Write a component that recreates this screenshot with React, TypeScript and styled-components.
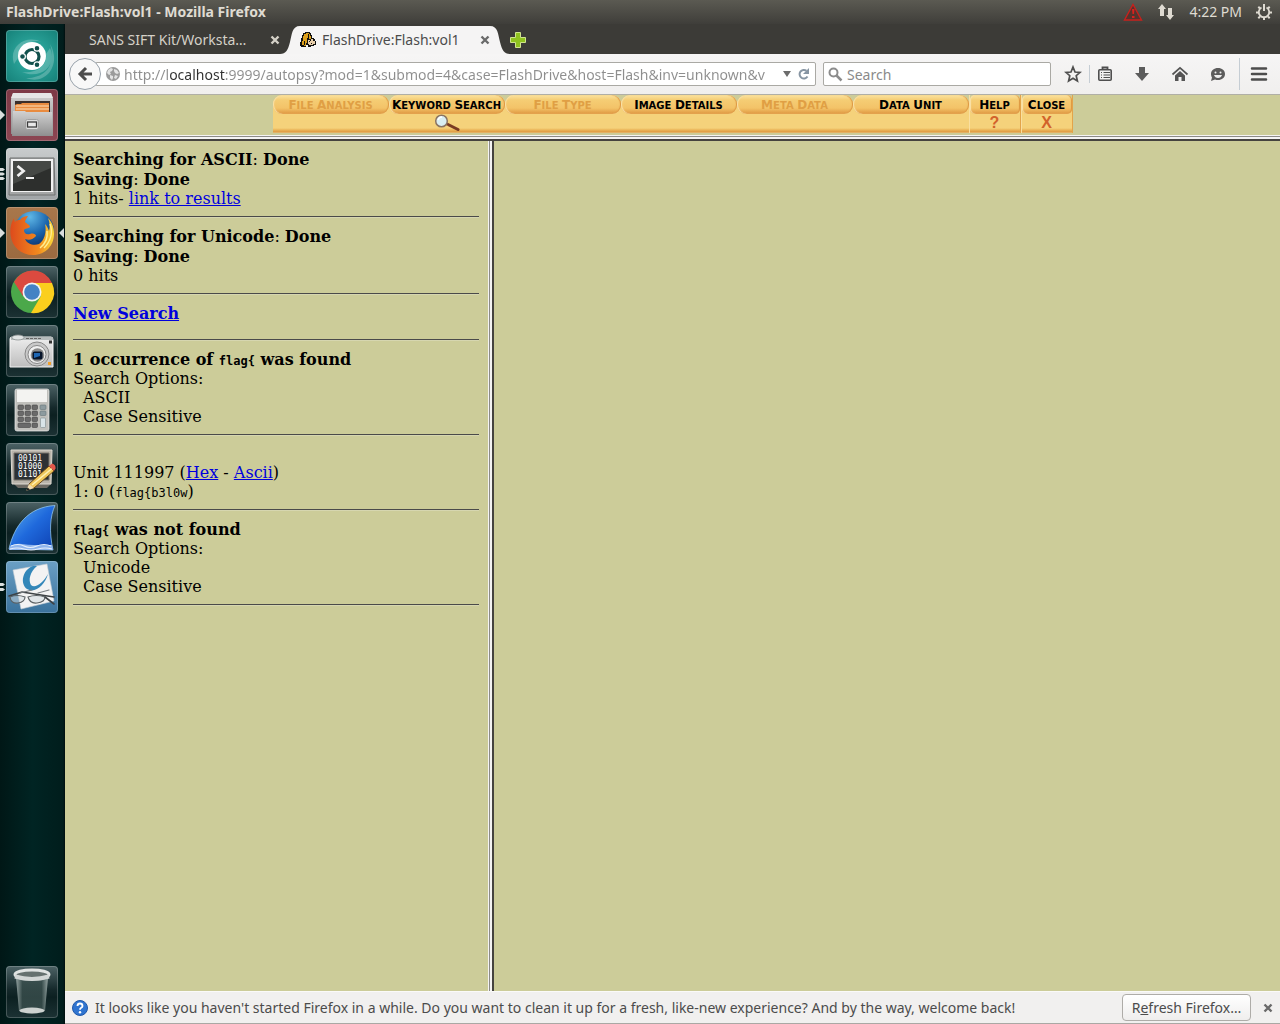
import React from "react";
import styled, { createGlobalStyle, css } from "styled-components";

const ui = `"Noto Sans", "Open Sans", sans-serif`;
const paper = "#cccc99";

const GlobalStyle = createGlobalStyle`
  *, *::before, *::after { box-sizing: border-box; }
  body { margin: 0; background: #001a1a; }
  button, input { font: inherit; color: inherit; }
  button { padding: 0; border: 0; background: none; cursor: pointer; }
  svg { display: block; flex: none; }
`;

/* ---------- desktop shell ---------- */

const Desktop = styled.div`
  display: flex;
  flex-direction: column;
  min-height: 100vh;
  font: 14px/20px ${ui};
`;

const Panel = styled.header`
  display: flex;
  align-items: center;
  justify-content: space-between;
  height: 24px;
  padding: 0 8px 0 6px;
  color: #dfdbd2;
  background: linear-gradient(#5b5a52, #3f3e3a);
`;

const PanelTitle = styled.h1`
  margin: 0;
  font-size: 14px;
  font-weight: 700;
  line-height: 24px;
  white-space: nowrap;
`;

const Indicators = styled.div`
  display: flex;
  align-items: center;
  gap: 14px;
`;

const Clock = styled.time`
  line-height: 24px;
`;

const Workspace = styled.div`
  display: flex;
  flex: 1;
`;

const Launcher = styled.nav`
  display: flex;
  flex-direction: column;
  flex: none;
  gap: 7px;
  width: 65px;
  padding: 6px;
  background: linear-gradient(90deg, #001716, #002423 50%, #001d1c 97%, #000e0e);
`;

const LauncherButton = styled.button<{ $fill: string; $last?: boolean }>`
  position: relative;
  width: 52px;
  height: 52px;
  border-radius: 4px;
  background: ${(p) => p.$fill};
  box-shadow: inset 0 0 0 1px rgba(255, 255, 255, 0.2);
  ${(p) => p.$last && css`margin-top: auto;`}
`;

const Marker = styled.svg<{ $side: "left" | "right" }>`
  position: absolute;
  top: 20px;
  ${(p) => (p.$side === "left" ? "left: -6px;" : "right: -6px;")}
`;

/* ---------- browser chrome ---------- */

const Window = styled.div`
  display: flex;
  flex: 1;
  flex-direction: column;
  min-width: 0;
  color: #4c4c4c;
`;

const TabStrip = styled.div`
  display: flex;
  align-items: flex-end;
  height: 30px;
  padding-left: 13px;
  background: #3c3b37;
`;

const Tab = styled.div<{ $active?: boolean }>`
  display: flex;
  align-items: center;
  height: 28px;
  gap: 6px;
  color: ${(p) => (p.$active ? "#4c4c4c" : "#d5d1c8")};
  background: ${(p) => (p.$active ? "#f5f4f4" : "none")};
  width: ${(p) => (p.$active ? "190px" : "202px")};
  padding-left: ${(p) => (p.$active ? "0" : "11px")};
`;

const TabLabel = styled.button`
  flex: 1;
  overflow: hidden;
  text-align: left;
  white-space: nowrap;
`;

const NewTab = styled.button`
  align-self: center;
  padding-top: 1px;
`;

const Toolbar = styled.div`
  display: flex;
  align-items: center;
  height: 41px;
  padding: 0 9px 0 4px;
  background: linear-gradient(#f6f5f5, #f0efee);
  border-bottom: 1px solid #b0afa6;
`;

const Back = styled.button`
  display: grid;
  flex: none;
  place-items: center;
  z-index: 1;
  width: 32px;
  height: 32px;
  margin-right: -6px;
  border: 1px solid #98a2ab;
  border-radius: 50%;
  background: #f8f8f8;
`;

const Field = styled.div`
  display: flex;
  align-items: center;
  min-width: 0;
  height: 24px;
  gap: 4px;
  border: 1px solid #aaa9a4;
  border-radius: 2px;
  background: #fff;
`;

const AddressField = styled(Field)`
  flex: 1;
  padding: 0 4px 0 10px;
  margin-right: 7px;
`;

const SearchField = styled(Field)`
  flex: 0 1 228px;
  padding: 0 4px;
`;

const TextInput = styled.input`
  flex: 1;
  min-width: 0;
  height: 22px;
  padding: 0;
  border: 0;
  outline: 0;
  background: none;
  color: #8a8a8a;
  &::placeholder { color: #8a8a8a; opacity: 1; }
`;

/* The host name reads darker than the rest of the address. */
const AddressInput = styled(TextInput)`
  color: #8e8e8e;
  background: linear-gradient(90deg, #8e8e8e 44px, #303030 44px 101px, #8e8e8e 101px);
  background-clip: text;
  -webkit-background-clip: text;
  -webkit-text-fill-color: transparent;
`;

const Tools = styled.div`
  display: flex;
  align-items: center;
  gap: 20px;
  padding-left: 13px;
`;

const ToolGroup = styled.div`
  display: flex;
  align-items: center;
  gap: 7px;
`;

const MenuGroup = styled(ToolGroup)`
  margin-left: -8px;
`;

const Rule = styled.span<{ $tall?: boolean }>`
  width: 1px;
  height: ${(p) => (p.$tall ? "32px" : "18px")};
  background: #c5cdd4;
`;

/* ---------- page frames ---------- */

const Frameset = styled.main`
  display: flex;
  flex: 1;
  flex-direction: column;
  background: ${paper};
  color: #000;
`;

const NavFrame = styled.nav`
  display: flex;
  justify-content: center;
  height: 40px;
`;

const HorizontalSplit = styled.div`
  height: 6px;
  background: linear-gradient(#f4f3f2 1px, #8c8b88 1px 2px, #f4f3f2 2px 4px, #45433f 4px);
`;

const Columns = styled.div`
  display: grid;
  flex: 1;
  grid-template-columns: 35fr 6px 65fr;
`;

const VerticalSplit = styled.div`
  background: linear-gradient(90deg, #f4f3f2 1px, #8c8b88 1px 2px, #f4f3f2 2px 4px, #45433f 4px);
`;

const NavItem = styled.a<{ $small?: boolean; $muted?: boolean }>`
  display: flex;
  flex-direction: column;
  width: ${(p) => (p.$small ? "52px" : "116px")};
  height: 38px;
  text-decoration: none;
  color: ${(p) => (p.$muted ? "#e09f44" : "#000")};
  background: linear-gradient(transparent 12px, #f5d27b 12px 33px, #eab458 35px, #de9b42 37px, #e8c98a);
  ${(p) => p.$small && css`border-right: 1px solid #e3a44a; border-left: 1px solid #f9dfa0;`}
`;

const NavLabel = styled.span<{ $small?: boolean }>`
  display: block;
  height: 19px;
  border-radius: ${(p) => (p.$small ? "5px" : "9px")};
  background: linear-gradient(#fbe3a0, #f5cd74 5px, #f3c368 13px, #de9641);
  box-shadow: inset 1px 0 1px #fae3ac, inset -1px 0 1px #dd9640;
  font: 700 10px/20px "DejaVu Sans", sans-serif;
  text-align: center;
  white-space: nowrap;
`;

const NavWord = styled.span`
  display: inline-block;
  text-transform: uppercase;
  &::first-letter { font-size: 12px; }
`;

const NavMark = styled.span`
  display: flex;
  justify-content: center;
  height: 19px;
  color: #d2622b;
  font: 700 16px/18px "Liberation Sans", sans-serif;
`;

const Results = styled.section`
  padding: 8px 9px 8px 8px;
  font: 16px/19px "DejaVu Serif", serif;

  a { color: #0000dd; text-decoration: underline; }
`;

const Line = styled.div<{ $strong?: boolean; $indent?: boolean }>`
  padding-top: ${(p) => (p.$strong ? "1px" : "0")};
  padding-left: ${(p) => (p.$indent ? "10px" : "0")};
`;

const Code = styled.code`
  font-family: "DejaVu Sans Mono", monospace;
  font-size: 12px;
  line-height: 16px;
`;

const Divider = styled.hr`
  height: 2px;
  margin: 8px 0;
  border: 0;
  border-top: 1px solid #4a4a4a;
  border-bottom: 1px solid #d6d6b0;
`;

const Gap = styled.div<{ $size: number }>`
  height: ${(p) => p.$size}px;
`;

/* ---------- notification ---------- */

const Notice = styled.footer`
  display: flex;
  align-items: center;
  height: 33px;
  padding: 0 7px;
  gap: 7px;
  background: #f1f0ef;
  border-top: 1px solid #fafaf8;
  border-bottom: 1px solid #aaa8a4;
`;

const NoticeText = styled.p`
  flex: 1;
  margin: 0;
  white-space: nowrap;
`;

const Refresh = styled.button`
  width: 129px;
  height: 27px;
  margin-right: 5px;
  border: 1px solid #aeaca8;
  border-radius: 4px;
  background: linear-gradient(#ffffff, #efeeed);
  white-space: nowrap;
`;

/* ---------- drawings ---------- */

const CloseGlyph = ({ color }: { color: string }) => (
  <svg width="10" height="10" viewBox="0 0 10 10" aria-hidden="true">
    <path d="M1.5 1.5l7 7M8.5 1.5l-7 7" stroke={color} strokeWidth="2.4" />
  </svg>
);

const TabEdge = ({ flip }: { flip?: boolean }) => (
  <svg width="20" height="28" viewBox="0 0 20 28" aria-hidden="true">
    <path
      d={flip ? "M0 0C8 0 8 8 10 16C12 24 14 28 20 28H0Z" : "M20 0C12 0 12 8 10 16C8 24 6 28 0 28H20Z"}
      fill="#f5f4f4"
    />
  </svg>
);

const DogIcon = () => (
  <svg width="16" height="16" viewBox="0 0 16 16" aria-hidden="true" shapeRendering="crispEdges">
    <path d="M5 0h5v1h1v2h1v3h2v1h1v2h1v4h-2v1h-3v1H8v-2H6v2H1v-1H0v-4h1V6h1V3h1V1h2z" fill="#111" />
    <path d="M6 1h3v1H8v4H7v5H6v3H4v-1h1V9H4v4H2V9h1V4h1V2h2zM9 2h1v2h1v3H9z" fill="#dda01c" />
    <path d="M8 8h2v1h1V7h2v1h2v4h-2v1H9v-1H8z" fill="#ead0ac" />
    <path d="M9 9h1v1H9zM13 8h2v1h-2zM11 11h1v1h-1z" fill="#111" />
  </svg>
);

const Globe = () => (
  <svg width="14" height="14" viewBox="0 0 14 14" aria-hidden="true">
    <circle cx="7" cy="7" r="7" fill="#9b9b9b" />
    <path d="M2 3l3-2 2 1-1 2-2 1 1 2-2 1-2-2zM8 2l3 1 2 3-2 1-2-1-1-2zM4 8l3 1v2l-1 2-2-2zM9 8l3 1-2 3-2-1z" fill="#e3e3e3" />
  </svg>
);

const UbuntuIcon = () => (
  <svg width="52" height="52" viewBox="0 0 52 52" aria-hidden="true">
    <path d="M8 34C2 16 20 4 36 12C24 8 12 18 12 28zM44 18C52 36 34 50 16 42C30 44 42 36 40 24zM20 48C42 48 50 32 44 14C56 34 40 56 20 48z" fill="#fff" opacity=".22" />
    <circle cx="26" cy="26" r="14" fill="#fff" />
    <circle cx="26" cy="26.5" r="7" fill="none" stroke="#12504c" strokeWidth="3.2" />
    <g fill="#12504c" stroke="#fff" strokeWidth="1.2">
      <circle cx="16.5" cy="26.5" r="2.9" />
      <circle cx="31" cy="18.3" r="2.9" />
      <circle cx="31" cy="34.7" r="2.9" />
    </g>
  </svg>
);

const FilesIcon = () => (
  <svg width="52" height="52" viewBox="0 0 52 52" aria-hidden="true">
    <defs>
      <linearGradient id="drawer" x1="0" y1="0" x2="0" y2="1"><stop offset="0" stopColor="#d2d2d2" /><stop offset="1" stopColor="#8f8f8f" /></linearGradient>
    </defs>
    <path d="M7 4h38l2 6v35H5V10z" fill="url(#drawer)" />
    <path d="M7 4h38l2 5H5z" fill="#e6e6e6" />
    <path d="M9 12h35v11H9z" fill="#3a2f2b" />
    <path d="M9 16l2-1h4l1-1h27v9H9z" fill="#e98b3f" />
    <path d="M10 17h33M10 20h33" stroke="#fde2bd" strokeWidth="1" />
    <path d="M7 22h12l1 1h26l1 24H6z" fill="url(#drawer)" />
    <rect x="19.5" y="30.5" width="13" height="10" rx="2" fill="#dedede" stroke="#a0a0a0" />
    <rect x="21.5" y="33" width="9" height="5" fill="#e8e8e8" stroke="#3c3c3c" strokeWidth="1.3" />
  </svg>
);

const TerminalIcon = () => (
  <svg width="52" height="52" viewBox="0 0 52 52" aria-hidden="true">
    <path d="M4 10h44l1 37H3z" fill="#a4a6a6" stroke="#6f7171" />
    <path d="M5 11h42v33H5z" fill="#f2f2f2" />
    <rect x="7" y="13" width="38" height="30" fill="#2d2f2d" />
    <path d="M7 13h38v7L7 36z" fill="#454845" />
    <path d="M11.5 18l6 5-6 5" fill="none" stroke="#f2f2f2" strokeWidth="2.8" />
    <path d="M20 30h8" stroke="#f2f2f2" strokeWidth="2" />
  </svg>
);

const FirefoxIcon = () => (
  <svg width="52" height="52" viewBox="0 0 52 52" aria-hidden="true">
    <defs>
      <radialGradient id="sea" cx=".4" cy=".15" r=".8"><stop offset="0" stopColor="#5fb7e6" /><stop offset=".55" stopColor="#1c66ae" /><stop offset="1" stopColor="#0b2d66" /></radialGradient>
      <linearGradient id="fox" x1="0" y1="0" x2="1" y2="0"><stop offset="0" stopColor="#dd4b1c" /><stop offset=".65" stopColor="#f28a1e" /><stop offset="1" stopColor="#fbd93a" /></linearGradient>
    </defs>
    <circle cx="28" cy="24" r="20" fill="url(#sea)" />
    <path d="M8 11C5 16 4 21 4.5 28C6 40 15 48 27 48C40 48 48 38 48 27C48 20 46 15 42 11C44 16 44 20 43 24C42 21 41 19 39 17C41 25 38 34 33 37C28 39 21 37 19 32C24 34 27 32 30 29C30 27 27 26 24 27C20 28 18 26 18 23C19 21 22 22 24 20C24 18 21 17 19 15C19 13 21 11 22 9C19 9 16 10 14 13C12 13 11 13 9 15C8 13 8 12 8 11Z" fill="url(#fox)" />
    <path d="M44 17C47 25 45 34 38 41M41 24C42 31 39 37 34 41" fill="none" stroke="#ffee91" strokeWidth="1.5" />
  </svg>
);

const ChromeIcon = () => (
  <svg width="52" height="52" viewBox="0 0 52 52" aria-hidden="true">
    <circle cx="26" cy="26" r="21" fill="#4ba84a" />
    <path d="M8 16A21 21 0 0 1 46 17H26L17 30z" fill="#db4a3f" />
    <path d="M46 17A21 21 0 0 1 25 47L35 30 28 17z" fill="#fbcf1d" />
    <circle cx="26" cy="26" r="9.5" fill="#f4f4f4" />
    <circle cx="26" cy="26" r="7.8" fill="#4482c4" />
  </svg>
);

const CameraIcon = () => (
  <svg width="52" height="52" viewBox="0 0 52 52" aria-hidden="true">
    <defs>
      <linearGradient id="body" x1="0" y1="0" x2="0" y2="1"><stop offset="0" stopColor="#eeeeee" /><stop offset="1" stopColor="#bdbdbd" /></linearGradient>
    </defs>
    <path d="M4 14q0-2 2-2h39q2 0 2 3v27H4z" fill="url(#body)" stroke="#f4f4f4" />
    <path d="M5 15h42v-3H5z" fill="#b4baba" />
    <ellipse cx="12" cy="12.5" rx="6" ry="2.5" fill="#dfe3e3" stroke="#8a9090" strokeWidth=".8" />
    <path d="M20 13.5h15" stroke="#666" strokeDasharray="3 1" />
    <rect x="43" y="15.5" width="3" height="3" fill="#333" />
    <circle cx="31" cy="29" r="12" fill="#c9c9c9" stroke="#888" />
    <circle cx="31" cy="29.5" r="9" fill="#f0f0f0" stroke="#888" />
    <circle cx="31.5" cy="30" r="6.8" fill="#8a8a8a" />
    <rect x="26.5" y="26.5" width="10" height="8" rx="2" fill="#07142a" />
    <path d="M28 28h6v3l-6 2z" fill="#1e66b4" />
    <rect x="42" y="37" width="3" height="3" fill="#f0a02c" />
  </svg>
);

const CalculatorIcon = () => (
  <svg width="52" height="52" viewBox="0 0 52 52" aria-hidden="true">
    <rect x="9" y="5" width="34" height="42" rx="2" fill="#c0c0bc" stroke="#eee" strokeWidth=".7" />
    <rect x="11" y="6" width="30" height="12" fill="#f3f3f1" />
    {[21, 27, 33].map((y) =>
      [12, 19, 26].map((x) => <rect key={`${x}-${y}`} x={x} y={y} width="5.5" height="4.5" rx="1" fill="#6a6a6a" stroke="#444" strokeWidth=".6" />)
    )}
    <rect x="12" y="39" width="12.5" height="4.5" rx="1" fill="#6a6a6a" stroke="#444" strokeWidth=".6" />
    <rect x="26" y="39" width="5.5" height="4.5" rx="1" fill="#6a6a6a" stroke="#444" strokeWidth=".6" />
    <rect x="34" y="21" width="6" height="4.5" rx="1" fill="#8d9b9f" stroke="#66757a" strokeWidth=".6" />
    <rect x="34" y="27" width="6" height="4.5" rx="1" fill="#8d9b9f" stroke="#66757a" strokeWidth=".6" />
    <rect x="34.5" y="34" width="5" height="9.5" rx="1" fill="#d9e4e8" stroke="#7d8b8f" strokeWidth=".6" />
  </svg>
);

const HexEditorIcon = () => (
  <svg width="52" height="52" viewBox="0 0 52 52" aria-hidden="true">
    <path d="M8 41h37l-4 4H12z" fill="#6d6a64" />
    <path d="M5 7h41l-1 34H6z" fill="#b9b4ab" stroke="#dedad2" />
    <path d="M8 10h35v27H8z" fill="#2d3134" stroke="#77736b" />
    <text fill="#fff" fontFamily="DejaVu Sans Mono, monospace" fontSize="8">
      <tspan x="12" y="18">00101</tspan>
      <tspan x="12" y="26">01000</tspan>
      <tspan x="12" y="34">01101</tspan>
    </text>
    <path d="M23 41L43 23l5 5-20 17-5 1z" fill="#efc65b" stroke="#5b3c14" strokeWidth=".9" />
    <path d="M26 42L46 25.5" stroke="#fff1b4" strokeWidth="1.6" />
    <path d="M43 23l3-2.5q4 1 3.5 5L48 28z" fill="#e2564a" />
    <path d="M20 48l3-7 5 4z" fill="#f0dcb0" />
    <path d="M20 48l1.5-3.5 2.5 2z" fill="#222" />
  </svg>
);

const SharkIcon = () => (
  <svg width="52" height="52" viewBox="0 0 52 52" aria-hidden="true">
    <defs>
      <linearGradient id="fin" x1="0" y1="0" x2="1" y2="1"><stop offset="0" stopColor="#5db0f0" /><stop offset=".5" stopColor="#1f69dc" /><stop offset="1" stopColor="#0d3fb0" /></linearGradient>
    </defs>
    <path d="M3 47C8 24 22 5 49 3.5C44 14 43 30 47 48z" fill="url(#fin)" stroke="#9cd2f6" strokeWidth=".7" />
    <path d="M4 44q6-3 12-2t12 1 10 0 8 0l1 5H3z" fill="#8fb4ec" />
    <path d="M5 44q7-3 13 0t13 0 14 0M4 47q7-2 14 0t14 0 14 0" fill="none" stroke="#e6effc" strokeWidth="1.2" />
  </svg>
);

const ReaderIcon = () => (
  <svg width="52" height="52" viewBox="0 0 52 52" aria-hidden="true">
    <path d="M7 9L41 3l7 37-33 8z" fill="#f3f3f3" stroke="#c4cdd4" strokeWidth=".6" />
    <path d="M27 5C16 9 14 23 21 28C29 33 39 24 42 13C37 22 29 28 25 24C22 19 24 11 31 5z" fill="#3387b9" />
    <g fill="none" strokeLinecap="round">
      <path d="M3 35L16 31l32 5" stroke="#3d4245" strokeWidth="1.6" />
      <path d="M14 32L26 29M32 32l11-3" stroke="#777d80" strokeWidth="1.2" />
      <path d="M4 36q1 7 8 6 7-1 7-6-8-3-15 0zM22 36q2 7 9 6 8-1 8-6-9-3-17 0z" fill="#cfd9df" fillOpacity=".5" stroke="#5a6063" strokeWidth="1.1" />
      <path d="M39 36l9 7" stroke="#3d4245" strokeWidth="1.6" />
    </g>
  </svg>
);

const TrashIcon = () => (
  <svg width="52" height="52" viewBox="0 0 52 52" aria-hidden="true">
    <defs>
      <linearGradient id="bin" x1="0" y1="0" x2="1" y2="0"><stop offset="0" stopColor="#b5c2c0" /><stop offset=".2" stopColor="#3d5250" /><stop offset=".8" stopColor="#3d5250" /><stop offset="1" stopColor="#b5c2c0" /></linearGradient>
    </defs>
    <path d="M10 12l3 33q13 6 26 0l3-33z" fill="url(#bin)" opacity=".75" />
    <ellipse cx="26" cy="44.5" rx="12.5" ry="3" fill="#cdd2d0" />
    <ellipse cx="26" cy="8.5" rx="17" ry="4.5" fill="#66716f" stroke="#e0e3e2" strokeWidth="3" />
    <path d="M9 10.5q17 5 34 0" fill="none" stroke="#d2d6d5" strokeWidth="4" />
  </svg>
);

const glass = "linear-gradient(#4d6366, #15292b 45%, #0c2021 60%, #1c3234)";

const apps = [
  { name: "Search your computer", fill: "radial-gradient(#35b5aa, #158078)", Icon: UbuntuIcon },
  { name: "Files", fill: "linear-gradient(#7d3946, #8c4652)", Icon: FilesIcon, windows: 1 },
  { name: "Terminal", fill: "linear-gradient(#c9cccd, #a0a4a6)", Icon: TerminalIcon, windows: 3 },
  { name: "Firefox Web Browser", fill: "linear-gradient(#a8774b, #9b6a40)", Icon: FirefoxIcon, windows: 1, focused: true },
  { name: "Google Chrome", fill: glass, Icon: ChromeIcon },
  { name: "Screenshot", fill: glass, Icon: CameraIcon },
  { name: "Calculator", fill: glass, Icon: CalculatorIcon },
  { name: "Hex Editor", fill: glass, Icon: HexEditorIcon },
  { name: "Wireshark", fill: glass, Icon: SharkIcon },
  { name: "Document Viewer", fill: "linear-gradient(#6ba0c4, #3a729c)", Icon: ReaderIcon, windows: 2 },
  { name: "Trash", fill: glass, Icon: TrashIcon, last: true },
];

const markerPath: Record<number, string> = {
  1: "M0 1l5 5-5 5z",
  2: "M0 2h3l2 1.5-2 1.5H0zM0 7h3l2 1.5L3 10H0z",
  3: "M0 0h3l2 1.5L3 3H0zM0 4.5h3L5 6 3 7.5H0zM0 9h3l2 1.5L3 12H0z",
};

const navItems = [
  { label: "File Analysis", muted: true },
  { label: "Keyword Search", lens: true },
  { label: "File Type", muted: true },
  { label: "Image Details" },
  { label: "Meta Data", muted: true },
  { label: "Data Unit" },
  { label: "Help", small: true, mark: "?" },
  { label: "Close", small: true, mark: "X" },
];

const Lens = () => (
  <svg width="26" height="18" viewBox="0 0 26 18" aria-hidden="true">
    <path d="M13 10l11 5.5" stroke="#7a3b22" strokeWidth="3" strokeLinecap="round" />
    <circle cx="7.5" cy="7" r="5.8" fill="#d9eef2" stroke="#8a7463" strokeWidth="1.5" />
    <path d="M4 6q1-3 4-3" fill="none" stroke="#fff" strokeWidth="1.5" />
  </svg>
);

export default function App() {
  return (
    <Desktop>
      <GlobalStyle />
      <Panel>
        <PanelTitle>FlashDrive:Flash:vol1 - Mozilla Firefox</PanelTitle>
        <Indicators>
          <svg width="20" height="18" viewBox="0 0 20 18" aria-hidden="true">
            <path d="M10 1.5L18.5 17h-17z" fill="#55332d" stroke="#c8201c" strokeWidth="1.4" />
            <path d="M9 6h2.500l-.5 5H9.500zM9 13h2.500v2H9z" fill="#d8221e" />
          </svg>
          <svg width="18" height="18" viewBox="0 0 18 18" aria-hidden="true">
            <path d="M5 1l4 5H7v7H3V6H1zM13 17l-4-5h2V5h4v7h2z" fill="#dfdbd2" />
          </svg>
          <Clock>4:22 PM</Clock>
          <svg width="16" height="18" viewBox="0 0 16 18" aria-hidden="true">
            <path d="M5.5 4.5a5.2 5.2 0 1 0 5 0" fill="none" stroke="#dfdbd2" strokeWidth="1.8" />
            <path d="M8 1v7M8 14v3M0 9.500h3M13 9.500h3M2.300 3.800l1.700 1.700M13.700 3.800L12 5.500M2.300 15.200L4 13.500M13.700 15.200L12 13.500" stroke="#dfdbd2" strokeWidth="2" />
          </svg>
        </Indicators>
      </Panel>

      <Workspace>
        <Launcher aria-label="Launcher">
          {apps.map(({ name, fill, Icon, windows, focused, last }) => (
            <LauncherButton key={name} aria-label={name} $fill={fill} $last={last}>
              <Icon />
              {windows && (
                <Marker $side="left" width="5" height="12" viewBox="0 0 5 12" aria-hidden="true">
                  <path d={markerPath[windows]} fill="#d9dedd" />
                </Marker>
              )}
              {focused && (
                <Marker $side="right" width="5" height="12" viewBox="0 0 5 12" aria-hidden="true">
                  <path d="M5 1L0 6l5 5z" fill="#d9dedd" />
                </Marker>
              )}
            </LauncherButton>
          ))}
        </Launcher>

        <Window>
          <TabStrip>
            <Tab>
              <TabLabel>SANS SIFT Kit/Worksta…</TabLabel>
              <button aria-label="Close tab"><CloseGlyph color="#d5d1c8" /></button>
            </Tab>
            <TabEdge />
            <Tab $active>
              <DogIcon />
              <TabLabel>FlashDrive:Flash:vol1</TabLabel>
              <button aria-label="Close tab"><CloseGlyph color="#6a6a6a" /></button>
            </Tab>
            <TabEdge flip />
            <NewTab aria-label="New tab">
              <svg width="16" height="16" viewBox="0 0 16 16" aria-hidden="true">
                <path d="M5.5.5h5v5h5v5h-5v5h-5v-5h-5v-5h5z" fill="#8fc21f" stroke="#cfe58c" />
              </svg>
            </NewTab>
          </TabStrip>

          <Toolbar>
            <Back aria-label="Back">
              <svg width="16" height="16" viewBox="0 0 16 16" aria-hidden="true">
                <path d="M9 2L3 8l6 6M3 8h12" fill="none" stroke="#4c4c4c" strokeWidth="3" />
              </svg>
            </Back>
            <AddressField>
              <Globe />
              <AddressInput
                aria-label="Address"
                defaultValue="http://localhost:9999/autopsy?mod=1&submod=4&case=FlashDrive&host=Flash&inv=unknown&v"
              />
              <button aria-label="Show history">
                <svg width="12" height="8" viewBox="0 0 12 8" aria-hidden="true"><path d="M2 1h8L6 7z" fill="#6c6c6c" /></svg>
              </button>
              <button aria-label="Reload">
                <svg width="14" height="14" viewBox="0 0 14 14" aria-hidden="true">
                  <path d="M10.5 9.5A4.3 4.3 0 1 1 9.5 3.8" fill="none" stroke="#8795a3" strokeWidth="2" />
                  <path d="M12 1v6H6z" fill="#8795a3" />
                </svg>
              </button>
            </AddressField>
            <SearchField>
              <svg width="15" height="15" viewBox="0 0 15 15" aria-hidden="true">
                <circle cx="5.5" cy="5.5" r="4" fill="none" stroke="#8c8c8c" strokeWidth="2" />
                <path d="M8.5 8.5l5 5" stroke="#8c8c8c" strokeWidth="2.5" />
              </svg>
              <TextInput aria-label="Search" placeholder="Search" />
            </SearchField>
            <Tools>
              <ToolGroup>
                <button aria-label="Bookmark this page">
                  <svg width="18" height="18" viewBox="0 0 18 18" aria-hidden="true">
                    <path d="M9 2l2 5 5 .4-3.8 3.3L13.400 16 9 13.200 4.600 16l1.200-5.300L2 7.400 7 7z" fill="none" stroke="#4f4f4f" strokeWidth="1.7" />
                  </svg>
                </button>
                <Rule />
                <button aria-label="Bookmarks">
                  <svg width="16" height="16" viewBox="0 0 16 16" aria-hidden="true">
                    <rect x="1.8" y="3.8" width="12.4" height="10.4" rx="1" fill="none" stroke="#4f4f4f" strokeWidth="1.6" />
                    <path d="M5.5 4V1.5h5V4" fill="none" stroke="#4f4f4f" strokeWidth="1.8" />
                    <path d="M4 6.500h1M6.500 6.500H13M4 9h1M6.500 9H13M4 11.500h1M6.500 11.500H13" stroke="#4f4f4f" strokeWidth="1.1" />
                  </svg>
                </button>
              </ToolGroup>
              <button aria-label="Downloads">
                <svg width="18" height="16" viewBox="0 0 18 16" aria-hidden="true"><path d="M6 1h6v6h4l-7 8-7-8h4z" fill="#5c5c5c" /></svg>
              </button>
              <button aria-label="Home">
                <svg width="18" height="16" viewBox="0 0 18 16" aria-hidden="true">
                  <path d="M1.5 8.5L9 1.8l7.5 6.7" fill="none" stroke="#555" strokeWidth="1.7" />
                  <path d="M4 9.5L9 5l5 4.5V15h-3.500v-4h-3v4H4z" fill="#555" />
                </svg>
              </button>
              <button aria-label="Chat">
                <svg width="18" height="16" viewBox="0 0 18 16" aria-hidden="true">
                  <path d="M9 2c4 0 7 2.5 7 6s-3 6-7 6c-1 0-2 0-3-.5L2 15l1-3.500C2.300 10.500 2 9 2 8c0-3.500 3-6 7-6z" fill="#5c5c5c" />
                  <path d="M5 9h8q-1 3-4 3t-4-3z" fill="#eee" /><circle cx="6.5" cy="6.5" r="1" fill="#eee" /><circle cx="11.5" cy="6.5" r="1" fill="#eee" />
                </svg>
              </button>
              <MenuGroup>
                <Rule $tall />
                <button aria-label="Menu">
                  <svg width="24" height="16" viewBox="0 0 24 16" aria-hidden="true"><path d="M5 2.500h14M5 8h14M5 13.500h14" stroke="#4c4c4c" strokeWidth="2.5" strokeLinecap="round" /></svg>
                </button>
              </MenuGroup>
            </Tools>
          </Toolbar>

          <Frameset>
            <NavFrame aria-label="Autopsy modes">
              {navItems.map(({ label, muted, small, mark, lens }) => (
                <NavItem key={label} href="#" $muted={muted} $small={small}>
                  <NavLabel $small={small}>
                    {label.split(" ").map((word, i) => (
                      <React.Fragment key={word}>
                        {i > 0 && " "}
                        <NavWord>{word}</NavWord>
                      </React.Fragment>
                    ))}
                  </NavLabel>
                  <NavMark>{lens ? <Lens /> : mark}</NavMark>
                </NavItem>
              ))}
            </NavFrame>
            <HorizontalSplit />
            <Columns>
              <Results>
                <Line $strong><b>Searching for ASCII</b>: <b>Done</b></Line>
                <Line $strong><b>Saving</b>: <b>Done</b></Line>
                <Line>1 hits- <a href="#results">link to results</a></Line>
                <Divider />
                <Line $strong><b>Searching for Unicode</b>: <b>Done</b></Line>
                <Line $strong><b>Saving</b>: <b>Done</b></Line>
                <Line>0 hits</Line>
                <Divider />
                <Line $strong><a href="#new"><b>New Search</b></a></Line>
                <Gap $size={8} />
                <Divider />
                <Line $strong><b>1 occurrence of <Code>flag{"{"}</Code> was found</b></Line>
                <Line>Search Options:</Line>
                <Line $indent>ASCII</Line>
                <Line $indent>Case Sensitive</Line>
                <Divider />
                <Gap $size={19} />
                <Line>Unit 111997 (<a href="#hex">Hex</a> - <a href="#ascii">Ascii</a>)</Line>
                <Line>1: 0 (<Code>flag{"{"}b3l0w</Code>)</Line>
                <Divider />
                <Line $strong><b><Code>flag{"{"}</Code> was not found</b></Line>
                <Line>Search Options:</Line>
                <Line $indent>Unicode</Line>
                <Line $indent>Case Sensitive</Line>
                <Divider />
              </Results>
              <VerticalSplit />
              <section aria-label="Unit contents" />
            </Columns>
          </Frameset>

          <Notice>
            <svg width="16" height="16" viewBox="0 0 16 16" aria-hidden="true">
              <circle cx="8" cy="8" r="7.5" fill="#2f74d0" stroke="#1f57a8" />
              <path d="M5.5 6q0-2.5 2.5-2.5T10.5 6q0 1-1.3 1.8T8 9.8" fill="none" stroke="#fff" strokeWidth="1.8" />
              <circle cx="8" cy="12.2" r="1.2" fill="#fff" />
            </svg>
            <NoticeText>
              It looks like you haven't started Firefox in a while. Do you want to clean it up for a fresh, like-new experience? And by the way, welcome back!
            </NoticeText>
            <Refresh>R<u>e</u>fresh Firefox…</Refresh>
            <button aria-label="Close notification"><CloseGlyph color="#6a6a6a" /></button>
          </Notice>
        </Window>
      </Workspace>
    </Desktop>
  );
}
